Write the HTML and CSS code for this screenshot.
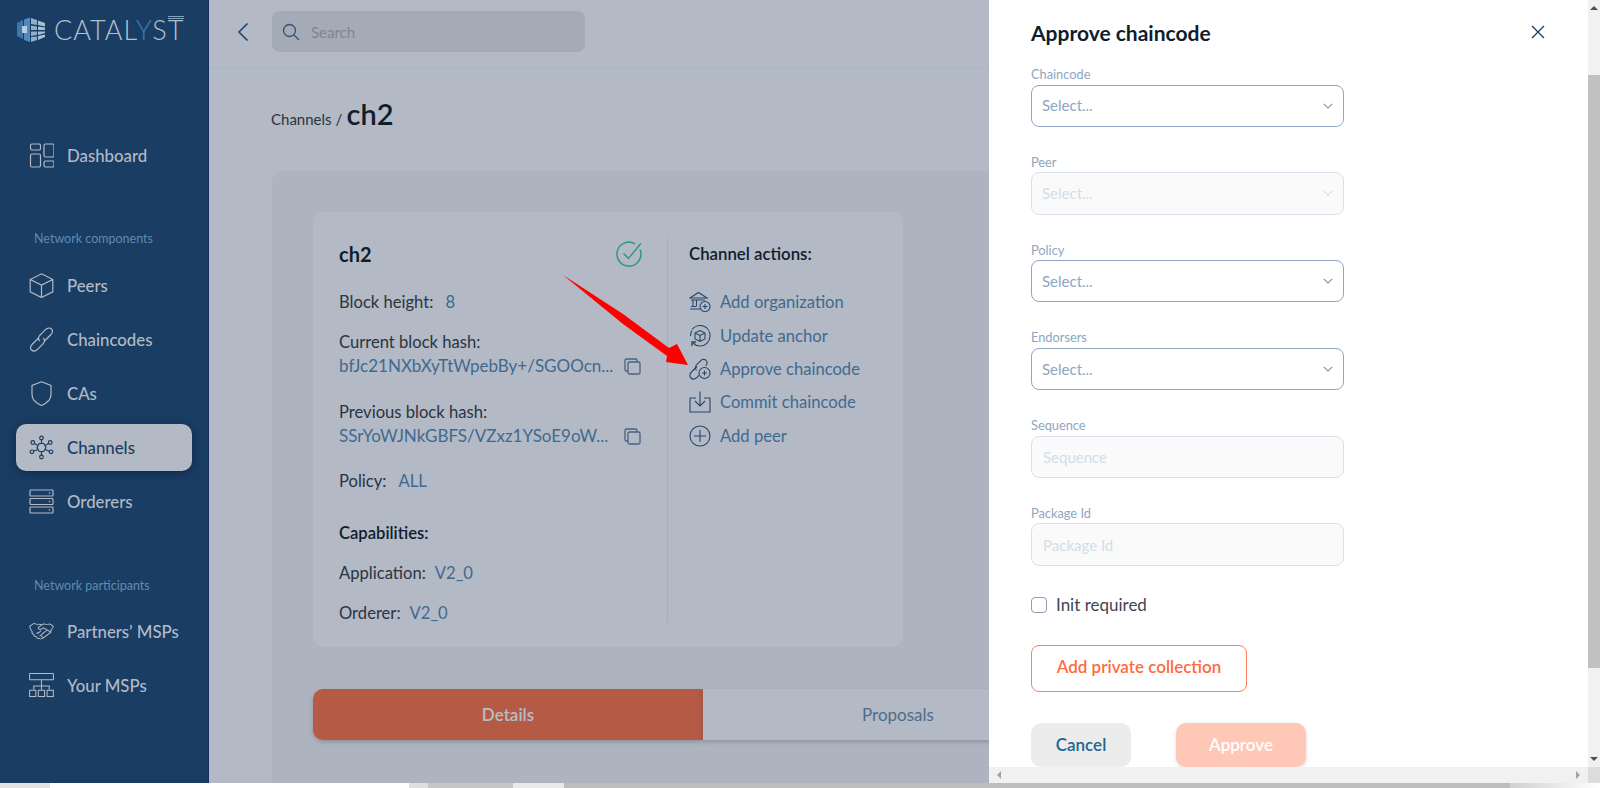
FILE: index.html
```html
<!DOCTYPE html>
<html lang="en">
<head>
    <meta charset="UTF-8">
    <meta name="viewport" content="width=device-width, initial-scale=1.0">
    <title>Catalyst - Channels</title>
    <link rel="stylesheet" href="styles.css">
</head>
<body>
    <div class="app">
        <aside class="sidebar">
            <div class="logo">
                <svg class="logo-cube" width="30" height="26" viewBox="0 0 30 26">
                    <path d="M1 6 L7 3 V22 L1 19 Z" fill="#3d78ad"/>
                    <path d="M8 2.500 L14 0.500 V25 L8 23 Z" fill="#4f8abb"/>
                    <rect x="6" y="9" width="5" height="7" fill="#b9cbdc"/>
                    <path d="M15 1 L21 3 V8 L15 7 Z M15 8.500 L21 9.500 V13 H15 Z M15 14.500 H21 V18 L15 19 Z M15 20 L21 19.500 V23 L15 25 Z" fill="#8fb0cd"/>
                    <path d="M22 3.500 L29 6 V9.500 L22 8 Z M22 9.500 L29 10.500 V13 H22 Z M22 14.500 H29 V16 L22 18 Z M22 19 L29 17.500 V20 L22 23 Z" fill="#a9bfd4"/>
                </svg>
                <span class="logo-text">CATAL<em>Y</em>S<span class="logo-t">T</span></span>
            </div>
            <nav class="nav">
                <a class="nav-item">
                    <svg width="25" height="25" viewBox="0 0 25 25" fill="none" stroke="currentColor" stroke-width="1.200"><rect x="1.500" y="1" width="10" height="6" rx="1.500"/><rect x="1.500" y="11" width="10" height="13" rx="1.500"/><rect x="15" y="1" width="10" height="13" rx="1.500"/><rect x="15" y="18" width="10" height="6" rx="1.500"/></svg>
                    Dashboard
                </a>
                <div class="nav-label">Network components</div>
                <a class="nav-item">
                    <svg width="25" height="25" viewBox="0 0 25 25" fill="none" stroke="currentColor" stroke-width="1.200"><path d="M12.500 0.800 L23.800 6.500 V18.800 L12.500 24.500 L1.200 18.800 V6.500 Z M1.200 6.500 L12.500 12 L23.800 6.500 M12.500 12 V24.500"/></svg>
                    Peers
                </a>
                <a class="nav-item">
                    <svg width="25" height="25" viewBox="0 0 25 25" fill="none" stroke="currentColor" stroke-width="1.200"><path d="M10 10.500 L3.500 17 C1 19.500 1 21.500 2.500 23 C4 24.500 6.500 24.300 8.500 22.300 L14 16.800 C15.800 15 15.800 12.500 14.300 11"/><path d="M15 14.500 L21.500 8 C24 5.500 24 3.500 22.500 2 C21 0.500 18.500 0.700 16.500 2.700 L11 8.200 C9.200 10 9.200 12.500 10.700 14"/></svg>
                    Chaincodes
                </a>
                <a class="nav-item">
                    <svg width="25" height="25" viewBox="0 0 25 25" fill="none" stroke="currentColor" stroke-width="1.200"><path d="M12.500 0.800 L22 4.500 V13.500 C22 18.500 17 22.500 12.500 24.500 C8 22.500 3 18.500 3 13.500 V4.500 Z"/></svg>
                    CAs
                </a>
                <a class="nav-item active">
                    <svg width="25" height="25" viewBox="0 0 25 25" fill="none" stroke="currentColor" stroke-width="1.200"><path d="M8 12.500 L10.200 8.500 H14.800 L17 12.500 L14.800 16.500 H10.200 Z M12.500 8.500 V4.500 M12.500 16.500 V20.500 M8.800 10.500 L5.500 8.500 M16.200 10.500 L19.500 8.500 M8.800 14.500 L5 16 M16.200 14.500 L20 16"/><circle cx="12.500" cy="3" r="1.800"/><circle cx="12.500" cy="22" r="1.800"/><circle cx="3.800" cy="7.500" r="1.800"/><circle cx="21.200" cy="7.500" r="1.800"/><circle cx="3" cy="16.800" r="1.800"/><circle cx="22" cy="16.800" r="1.800"/></svg>
                    Channels
                </a>
                <a class="nav-item">
                    <svg width="25" height="25" viewBox="0 0 25 25" fill="none" stroke="currentColor" stroke-width="1.200"><rect x="1" y="1" width="23" height="6" rx="0.800"/><rect x="1" y="9.500" width="23" height="6" rx="0.800"/><rect x="1" y="18" width="23" height="6" rx="0.800"/><path d="M20.500 3.200 v1.500 M20.500 11.700 v1.500 M20.500 20.200 v1.500"/></svg>
                    Orderers
                </a>
                <div class="nav-label second">Network participants</div>
                <a class="nav-item">
                    <svg width="26" height="20" viewBox="0 0 26 25" preserveAspectRatio="none" fill="none" stroke="currentColor" stroke-width="1.100"><path d="M0.800 6.500 L5 3 C7 4 9 4.500 11 4 L13 5 L16 3.500 C18 4.500 20 4.500 21.500 3.500 L25.200 6.500 C25 8.500 24 10 22.800 11.500 L22.800 14 L15 21 C14 22.500 12 22.800 11 21.800 C9.500 22 8 21 7.800 19.800 C6 19.500 5 18 5 16.800 C3.500 16.200 2.800 14.500 3.200 13 C1.800 11 1 9 0.800 6.500 Z"/><path d="M13 5 L9.500 8.500 C9.500 10.500 12 11 13.500 9.500 L15 8.500 L22.800 14 M18.500 11.500 L13 17 M15.500 14 L11 19 M12.500 12 L9 16 M9 14 L7.800 15.500 M15 21 L12.500 18.500"/></svg>
                    Partners’ MSPs
                </a>
                <a class="nav-item">
                    <svg width="26" height="26" viewBox="0 0 26 26" fill="none" stroke="currentColor" stroke-width="1.100"><rect x="0.600" y="1" width="24.800" height="6.500" rx="0.500"/><path d="M13 7.500 V18 M5 18 V14 H21 V18"/><rect x="0.600" y="18.500" width="6.500" height="6.500"/><rect x="9.700" y="18.500" width="6.500" height="6.500"/><rect x="18.800" y="18.500" width="6.500" height="6.500"/></svg>
                    Your MSPs
                </a>
            </nav>
        </aside>

        <main class="main">
            <header class="topbar">
                <svg class="back" width="12" height="20" viewBox="0 0 12 20" fill="none" stroke="#1c3f66" stroke-width="1.500"><path d="M10.500 1.500 L2 10 L10.500 18.500"/></svg>
                <div class="search">
                    <svg width="18" height="18" viewBox="0 0 18 18" fill="none" stroke="#34527a" stroke-width="1.300"><circle cx="7.500" cy="7.500" r="6"/><path d="M12 12 L17 17"/></svg>
                    <span>Search</span>
                </div>
            </header>
            <div class="breadcrumb"><span class="crumb">Channels /</span> <span class="crumb-now">ch2</span></div>
            <section class="panel">
                <div class="card">
                    <div class="info">
                        <div class="info-head">
                            <h2>ch2</h2>
                            <svg width="26" height="26" viewBox="0 0 26 26" fill="none" stroke="#2b9c7a" stroke-width="1.500"><path d="M24 8.500 A12 12 0 1 1 19 2.800"/><path d="M7.500 12.500 L12.500 17.500 L24.800 2.500"/></svg>
                        </div>
                        <div class="line first"><span class="key">Block height:</span><span class="val">8</span></div>
                        <div class="line gap-1">Current block hash:</div>
                        <div class="hash"><span class="val">bfJc21NXbXyTtWpebBy+/SGOOcn...</span><svg class="copy" width="17" height="17" viewBox="0 0 17 17" fill="none" stroke="#4a6180" stroke-width="1.300"><rect x="4" y="4" width="12" height="12" rx="1.500"/><path d="M4 13 H2.500 Q1 13 1 11.500 V2.500 Q1 1 2.500 1 H11.500 Q13 1 13 2.500 V4"/></svg></div>
                        <div class="line gap-2">Previous block hash:</div>
                        <div class="hash"><span class="val">SSrYoWJNkGBFS/VZxz1YSoE9oW...</span><svg class="copy" width="17" height="17" viewBox="0 0 17 17" fill="none" stroke="#4a6180" stroke-width="1.300"><rect x="4" y="4" width="12" height="12" rx="1.500"/><path d="M4 13 H2.500 Q1 13 1 11.500 V2.500 Q1 1 2.500 1 H11.500 Q13 1 13 2.500 V4"/></svg></div>
                        <div class="line gap-5"><span class="key">Policy:</span><span class="val">ALL</span></div>
                        <div class="line gap-3 strong">Capabilities:</div>
                        <div class="line gap-4"><span class="key tight">Application:</span><span class="val">V2_0</span></div>
                        <div class="line gap-4"><span class="key tight">Orderer:</span><span class="val">V2_0</span></div>
                    </div>
                    <div class="actions">
                        <div class="actions-title">Channel actions:</div>
                        <a class="action">
                            <svg width="22" height="22" viewBox="0 0 22 22" fill="none" stroke="#28476d" stroke-width="1.100"><path d="M1 7 L9.500 1.500 L18 7 Z M2 9 H16 M4 9.500 V15.500 M7.500 9.500 V15.500 M1 18 H11 M2 15.500 H7"/><circle cx="16" cy="15.500" r="5" fill="#b3b9c5"/><path d="M16 13 V18 M13.500 15.500 H18.500"/></svg>
                            Add organization
                        </a>
                        <a class="action">
                            <svg width="22" height="22" viewBox="0 0 22 22" fill="none" stroke="#28476d" stroke-width="1.100"><path d="M3 4.500 A10 10 0 0 1 21 11 A10 10 0 0 1 11 21 A10 10 0 0 1 4 18"/><path d="M1.500 11 A10 10 0 0 1 3 5.500"/><path d="M11 5.500 L16 8 V14 L11 16.500 L6 14 V8 Z M6 8 L11 10.500 L16 8 M11 10.500 V16.500"/><path d="M3 21 V17 H7" stroke-width="1.400"/></svg>
                            Update anchor
                        </a>
                        <a class="action">
                            <svg width="22" height="22" viewBox="0 0 22 22" fill="none" stroke="#28476d" stroke-width="1.100"><path d="M8 8.500 L2.500 14 C0.300 16.200 0.500 18.800 2 20 C3.500 21.500 6 21.300 8 19.300 L10 17.300"/><path d="M7.500 12.500 C6 10.500 6.300 8 8 6.300 L11.500 2.800 C13.300 1 15.800 1 17 2.300 C18.500 3.800 18.300 6 16.800 8"/><circle cx="15.500" cy="15" r="5.500" fill="#b3b9c5"/><path d="M15.500 12.500 V17.500 M13 15 H18"/></svg>
                            Approve chaincode
                        </a>
                        <a class="action">
                            <svg width="22" height="22" viewBox="0 0 22 22" fill="none" stroke="#28476d" stroke-width="1.100"><path d="M7 7 H1 V21 H21 V7 H15 M11 0.500 V15 M6 10 L11 15 L16 10"/></svg>
                            Commit chaincode
                        </a>
                        <a class="action">
                            <svg width="22" height="22" viewBox="0 0 22 22" fill="none" stroke="#28476d" stroke-width="1.100"><circle cx="11" cy="11" r="10"/><path d="M11 5 V17 M5 11 H17"/></svg>
                            Add peer
                        </a>
                    </div>
                </div>
                <div class="tabs">
                    <div class="tab selected">Details</div>
                    <div class="tab">Proposals</div>
                </div>
            </section>
            <svg class="pointer" width="130" height="95" viewBox="0 0 130 95"><polygon fill="#ff0000" points="0,0 60,39 106,73 114,69 125,90 103,87 104,81 60,49"/></svg>
        </main>

        <aside class="drawer">
            <div class="drawer-row">
                <form class="drawer-form">
                    <div class="drawer-head">
                        <h3>Approve chaincode</h3>
                        <svg width="14" height="14" viewBox="0 0 14 14" fill="none" stroke="#1c3f66" stroke-width="1.300"><path d="M1 1 L13 13 M13 1 L1 13"/></svg>
                    </div>
                    <div class="field">
                        <label>Chaincode</label>
                        <div class="select"><span>Select...</span><svg width="10" height="6" viewBox="0 0 12 7" fill="none" stroke="#6f8fb0" stroke-width="1.300"><path d="M1 1 L6 6 L11 1"/></svg></div>
                    </div>
                    <div class="field">
                        <label>Peer</label>
                        <div class="select disabled"><span>Select...</span><svg width="10" height="6" viewBox="0 0 12 7" fill="none" stroke="#d5dde6" stroke-width="1.300"><path d="M1 1 L6 6 L11 1"/></svg></div>
                    </div>
                    <div class="field">
                        <label>Policy</label>
                        <div class="select"><span>Select...</span><svg width="10" height="6" viewBox="0 0 12 7" fill="none" stroke="#6f8fb0" stroke-width="1.300"><path d="M1 1 L6 6 L11 1"/></svg></div>
                    </div>
                    <div class="field">
                        <label>Endorsers</label>
                        <div class="select"><span>Select...</span><svg width="10" height="6" viewBox="0 0 12 7" fill="none" stroke="#6f8fb0" stroke-width="1.300"><path d="M1 1 L6 6 L11 1"/></svg></div>
                    </div>
                    <div class="field">
                        <label>Sequence</label>
                        <input type="text" placeholder="Sequence" disabled>
                    </div>
                    <div class="field">
                        <label>Package Id</label>
                        <input type="text" placeholder="Package Id" disabled>
                    </div>
                    <label class="check"><input type="checkbox"> Init required</label>
                    <button type="button" class="btn-outline">Add private collection</button>
                    <div class="form-buttons">
                        <button type="button" class="btn-cancel">Cancel</button>
                        <button type="button" class="btn-approve">Approve</button>
                    </div>
                </form>
                <div class="vscroll">
                    <span class="arrow-up"></span>
                    <div class="vthumb"></div>
                    <span class="arrow-down"></span>
                </div>
            </div>
            <div class="hscroll">
                <div class="hbar"><span class="arrow-left"></span><span class="arrow-right"></span></div>
                <div class="corner"></div>
            </div>
        </aside>
    </div>
    <div class="strip">
        <span class="s1"></span><span class="s2"></span><span class="s3"></span><span class="s4"></span><span class="s5"></span><span class="s6"></span><span class="s7"></span>
    </div>
</body>
</html>
```

FILE: styles.css
```css
* {
    box-sizing: border-box;
}
body {
    font-family: Lato, "Liberation Sans", sans-serif;
    font-size: 17px;
    margin: 0;
    padding: 0;
    height: 788px;
    overflow: hidden;
    background-color: #fff;
    color: #2b3441;
}
.app {
    position: relative;
    display: flex;
    height: 783px;
    overflow: hidden;
}

/* sidebar */
.sidebar {
    width: 209px;
    flex-shrink: 0;
    background-color: #1a3d63;
    border-right: 1px solid #0e2f5c;
    color: #b3bac6;
}
.logo {
    display: flex;
    align-items: center;
    height: 60px;
    padding-left: 16px;
}
.logo-cube {
    margin-right: 8px;
}
.logo-text {
    font-size: 27px;
    font-weight: 300;
    letter-spacing: 1px;
    color: #b5c0cd;
    line-height: 30px;
}
.logo-text em {
    font-style: normal;
    color: #3d78ad;
}
.logo-t {
    border-top: 3px double #7fa3c4;
    display: inline-block;
    line-height: 22px;
}
.nav {
    padding: 71.5px 16px 0;
}
.nav-item {
    display: flex;
    align-items: center;
    gap: 13px;
    height: 47px;
    margin-bottom: 7px;
    padding-left: 13px;
    font-size: 16.8px;
    font-weight: 500;
    border-radius: 10px;
}
.nav-item svg {
    flex-shrink: 0;
    width: 25px;
}
.nav-item.active {
    background-color: #b3b9c5;
    color: #1a3d63;
    box-shadow: 0 2px 8px rgba(5, 20, 45, 0.5);
}
.nav-label {
    margin: 52px 0 15px 18px;
    font-size: 12.5px;
    line-height: 16px;
    color: #5f8bb0;
}
.nav-label.second {
    margin: 53px 0 14px 18px;
}

/* main */
.main {
    position: relative;
    flex: 1;
    min-width: 0;
    background-color: #b3b9c5;
    overflow: hidden;
}
.topbar {
    display: flex;
    align-items: center;
    height: 69px;
    padding: 0 0 5px 28px;
    border-bottom: 1px solid #a8b5c7;
}
.back {
    margin-right: 23px;
}
.search {
    display: flex;
    align-items: center;
    gap: 11px;
    width: 313px;
    height: 41px;
    padding-left: 10px;
    border-radius: 8px;
    background-color: #a4aab6;
    color: #7d8695;
    font-size: 15px;
}
.breadcrumb {
    height: 102px;
    padding: 27px 0 0 62px;
    color: #2b3441;
}
.crumb {
    font-size: 15px;
}
.crumb-now {
    font-size: 29px;
    font-weight: 600;
    color: #0f1d2e;
}
.panel {
    margin-left: 63px;
    height: 700px;
    width: 1000px;
    padding: 41px;
    border-radius: 10px 0 0 0;
    background-color: #aeb4bf;
}
.card {
    display: flex;
    width: 590px;
    height: 435px;
    padding: 26px 0 25px 26px;
    border-radius: 10px;
    background-color: #b3b9c5;
}
.info {
    width: 329px;
    padding-right: 26px;
    border-right: 1px solid #9fb0bd;
}
.info-head {
    display: flex;
    justify-content: space-between;
    align-items: center;
    height: 34px;
    margin: -1px -1px 0 0;
}
.info-head h2 {
    margin: 0;
    font-size: 20px;
    font-weight: 700;
    color: #0f1d2e;
}
.line {
    font-size: 16.6px;
    line-height: 24px;
}
.line.first {
    margin-top: 19px;
}
.gap-1 {
    margin-top: 16px;
}
.gap-2 {
    margin-top: 22px;
}
.gap-3 {
    margin-top: 28px;
}
.gap-4 {
    margin-top: 16px;
}
.gap-5 {
    margin-top: 21px;
}
.strong {
    font-weight: 600;
    color: #0f1d2e;
}
.key {
    margin-right: 12px;
}
.key.tight {
    margin-right: 9px;
}
.val {
    color: #3f6a90;
}
.hash {
    display: flex;
    justify-content: space-between;
    align-items: center;
    line-height: 24px;
    white-space: nowrap;
}
.actions {
    padding: 0 0 0 21px;
}
.actions-title {
    height: 40px;
    margin-bottom: 7.500px;
    font-size: 16.8px;
    line-height: 32px;
    font-weight: 600;
    color: #0f1d2e;
}
.action {
    display: flex;
    align-items: center;
    gap: 9px;
    height: 33.400px;
    font-size: 16.6px;
    color: #3f6a90;
}
.tabs {
    display: flex;
    margin-top: 42px;
}
.tab {
    width: 390px;
    height: 51px;
    line-height: 51px;
    text-align: center;
    color: #4e6d8c;
    background-color: #b3b9c5;
    box-shadow: 0 2px 4px rgba(60, 70, 90, 0.3);
}
.tab.selected {
    background-color: #b45a45;
    color: #b7bdc8;
    font-weight: 600;
    border-radius: 10px 0 0 10px;
}
.pointer {
    position: absolute;
    left: 354px;
    top: 275px;
}

/* drawer */
.drawer {
    position: absolute;
    top: 0;
    right: 0;
    bottom: 0;
    display: flex;
    flex-direction: column;
    width: 611px;
    background-color: #fff;
}
.drawer-row {
    display: flex;
    flex: 1;
    min-height: 0;
}
.drawer-form {
    flex: 1;
    padding: 0 0 0 42px;
    overflow: hidden;
}
.drawer-head {
    display: flex;
    justify-content: space-between;
    align-items: center;
    height: 64px;
    margin-bottom: 3px;
    padding-right: 43px;
}
.drawer-head h3 {
    margin: 0;
    font-size: 21px;
    font-weight: 700;
    color: #0f1d2e;
}
.field {
    width: 313px;
    height: 59.800px;
    margin-bottom: 28px;
}
.field label {
    display: block;
    height: 17.500px;
    font-size: 12.800px;
    line-height: 14px;
    color: #8ea6c0;
}
.select, .field input {
    display: flex;
    align-items: center;
    justify-content: space-between;
    width: 100%;
    height: 42.300px;
    padding: 0 10px;
    border: 1px solid #8ea6c4;
    border-radius: 8px;
    color: #8ea6c0;
    font-family: inherit;
    font-size: 15px;
    background-color: #fff;
}
.select span {
    margin-top: -1px;
}
.select.disabled, .field input {
    border-color: #d9e2ec;
    background-color: #fafafa;
    color: #d3dde8;
}
.field input {
    padding: 0 11px;
    font-size: 15px;
}
.field input::placeholder {
    color: #d3dde8;
    opacity: 1;
}
.check {
    display: flex;
    align-items: center;
    gap: 9px;
    height: 24px;
    margin-top: -1px;
    color: #3f4650;
}
.check input {
    appearance: none;
    width: 16px;
    height: 16px;
    margin: 0;
    border: 1px solid #8e9db5;
    border-radius: 4px;
    background-color: #fff;
}
.btn-outline {
    display: block;
    width: 216px;
    height: 47px;
    margin-top: 28px;
    padding-bottom: 4px;
    border: 1px solid #ff7f5e;
    border-radius: 8px;
    background-color: #fff;
    color: #ff6a3d;
    font-family: inherit;
    font-size: 17px;
    font-weight: 600;
}
.form-buttons {
    display: flex;
    gap: 45px;
    margin-top: 31px;
}
.btn-cancel, .btn-approve {
    height: 44px;
    padding-bottom: 2px;
    border: none;
    border-radius: 10px;
    font-family: inherit;
    font-size: 17px;
    font-weight: 600;
}
.btn-cancel {
    width: 100px;
    background-color: #ececec;
    color: #1d6491;
}
.btn-approve {
    width: 130px;
    background-color: #ffc7b5;
    color: #fff;
    box-shadow: 0 2px 4px rgba(0, 0, 0, 0.12);
}

/* the browser scrollbars */
.vscroll {
    position: relative;
    width: 12px;
    background-color: #f1f1f1;
}
.vthumb {
    height: 593px;
    margin-top: 75px;
    background-color: #c1c1c1;
}
.arrow-up, .arrow-down, .arrow-left, .arrow-right {
    position: absolute;
    width: 0;
    height: 0;
    border: 4px solid transparent;
}
.arrow-up {
    top: 2px;
    left: 2px;
    border-bottom-color: #505050;
}
.arrow-down {
    bottom: 2px;
    left: 2px;
    border-top-color: #505050;
}
.hscroll {
    display: flex;
    height: 16px;
}
.hbar {
    position: relative;
    flex: 1;
    background-color: #f1f1f1;
}
.corner {
    width: 12px;
    background-color: #dcdcdc;
}
.arrow-left {
    top: 4px;
    left: 4px;
    border-right-color: #a3a3a3;
}
.arrow-right {
    top: 4px;
    right: 4px;
    border-left-color: #a3a3a3;
}

/* strip of the window below the page */
.strip {
    display: flex;
    height: 5px;
}
.s1 { width: 50px; background-color: #e2e2e2; }
.s2 { width: 359px; background-color: #fff; }
.s3 { width: 19px; background-color: #dfdfdf; }
.s4 { width: 85px; background-color: #c6c6c6; }
.s5 { width: 51px; background-color: #e9e9e9; }
.s6 { width: 946px; background-color: #bdbdbd; }
.s7 { flex: 1; background-image: linear-gradient(90deg, #d0d0d0, #fff); }
```
